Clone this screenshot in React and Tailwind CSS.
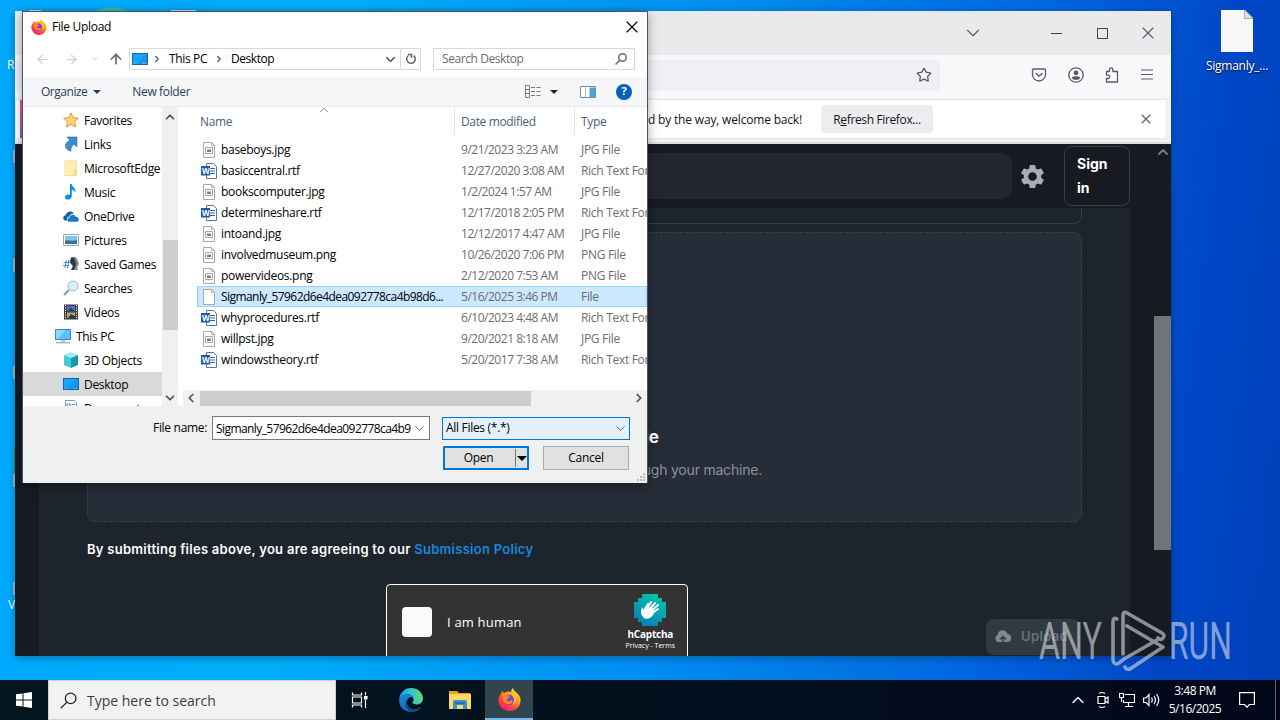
import {
  LuChevronDown,
  LuChevronUp,
  LuChevronLeft,
  LuChevronRight,
  LuX,
  LuArrowLeft,
  LuArrowRight,
  LuArrowUp,
  LuStar,
} from "react-icons/lu";
import { MdSettings } from "react-icons/md";

const PLACES = [
  { name: "Favorites", icon: "star" },
  { name: "Links", icon: "link" },
  { name: "MicrosoftEdge", icon: "folder" },
  { name: "Music", icon: "music" },
  { name: "OneDrive", icon: "cloud" },
  { name: "Pictures", icon: "picture" },
  { name: "Saved Games", icon: "games" },
  { name: "Searches", icon: "search" },
  { name: "Videos", icon: "video" },
  { name: "This PC", icon: "pc", root: true },
  { name: "3D Objects", icon: "cube" },
  { name: "Desktop", icon: "desktop", active: true },
  { name: "Documents", icon: "doc" },
];

const FILES = [
  { name: "baseboys.jpg", date: "9/21/2023 3:23 AM", type: "JPG File" },
  { name: "basiccentral.rtf", date: "12/27/2020 3:08 AM", type: "Rich Text Format" },
  { name: "bookscomputer.jpg", date: "1/2/2024 1:57 AM", type: "JPG File" },
  { name: "determineshare.rtf", date: "12/17/2018 2:05 PM", type: "Rich Text Format" },
  { name: "intoand.jpg", date: "12/12/2017 4:47 AM", type: "JPG File" },
  { name: "involvedmuseum.png", date: "10/26/2020 7:06 PM", type: "PNG File" },
  { name: "powervideos.png", date: "2/12/2020 7:53 AM", type: "PNG File" },
  {
    name: "Sigmanly_57962d6e4dea092778ca4b98d6...",
    date: "5/16/2025 3:46 PM",
    type: "File",
    selected: true,
  },
  { name: "whyprocedures.rtf", date: "6/10/2023 4:48 AM", type: "Rich Text Format" },
  { name: "willpst.jpg", date: "9/20/2021 8:18 AM", type: "JPG File" },
  { name: "windowstheory.rtf", date: "5/20/2017 7:38 AM", type: "Rich Text Format" },
];

function FirefoxIcon({ id, className }) {
  return (
    <svg viewBox="0 0 24 24" className={className}>
      <defs>
        <linearGradient id={`${id}-body`} x1="0.85" y1="0.1" x2="0.2" y2="0.95">
          <stop offset="0" stopColor="#ffe226" />
          <stop offset="0.35" stopColor="#ff9a1f" />
          <stop offset="0.65" stopColor="#ff4a3d" />
          <stop offset="1" stopColor="#e81e7c" />
        </linearGradient>
      </defs>
      <path
        fill={`url(#${id}-body)`}
        d="M3 6.500 4.200 2.800c.7 1 1.300 1.600 2.300 2.300 1-.9 2.200-1.300 3.700-1.500 1.200-.2 2.600.1 3.600.7C13.500 2.600 14.200 1 15.800 0c.2 2.200 2.200 3.500 4 5.200 2 2 3.800 4.300 3.800 7.600A11.500 11.200 0 0 1 .5 12.800C.4 10.300 1.200 8 3 6.500z"
      />
      <circle cx="12.300" cy="12.400" r="5.200" fill="#7542e5" />
      <path
        fill="#ff8a16"
        d="M4 6.800c2.300-.6 4.500.2 5.300 1.800 1.200.1 2.700.1 3 .7-.2 1.200-2.900 1.300-3.300 2.600-.2 1.300.9 1.600 2 1.800 1.600.3 2.900-1 4.300-.4 0 2.200-2.300 4-4.800 3.500C6.300 16 4 12.500 4 6.800z"
      />
      <path
        fill="#ffbd24"
        d="M14.500 4.500c3.200 1.700 5 4.600 4.300 8.300-.5 2.500-2.300 4.200-4.500 4.700 2.900-2.500 3.300-5.800 1.200-8.400-.8-1.100-1.300-2.700-1-4.600z"
      />
    </svg>
  );
}

function EdgeIcon() {
  return (
    <svg viewBox="0 0 24 24" className="size-6">
      <defs>
        <linearGradient id="edge-top" x1="0" y1="0.5" x2="1" y2="0.4">
          <stop offset="0" stopColor="#1b9de2" />
          <stop offset="0.5" stopColor="#35c1d8" />
          <stop offset="1" stopColor="#62dc6d" />
        </linearGradient>
        <linearGradient id="edge-base" x1="0" y1="0" x2="0.8" y2="1">
          <stop offset="0" stopColor="#1b8bdc" />
          <stop offset="1" stopColor="#0f5db5" />
        </linearGradient>
      </defs>
      <path
        fill="url(#edge-top)"
        d="M.3 11C.8 4.700 5.800 0 12 0c7 0 12 5 12 10.500 0 3.800-2.800 6-6.300 6-2.700 0-4.300-.9-4.300-1.900 0-.8 1.100-1.200 1.100-3.200C14.500 8.700 12 6.600 8.500 6.600 4.800 6.600 1.800 8.300.3 11z"
      />
      <path
        fill="url(#edge-base)"
        d="M.2 12.800C.3 8.700 4 6.500 8.200 6.500c3 0 5 1.200 5.900 3-3.600-1-6.200 1.200-6.200 4.700 0 4.300 3.900 7.600 8.600 7.100 1.700-.2 3.500-.9 4.700-1.900.4-.2.700.2.400.6C19.400 22.600 15.900 24 12.300 24 5.400 24 0 19 .2 12.800z"
      />
      <path
        fill="#114a8b"
        d="M10 10.200c-2.600 2.500-2.600 7.200.3 9.600 3 2.400 7.300 2 11-.6.5-.3.800.1.500.5C19.500 22.500 16 24 12.700 24 8.700 22.800 6 19.200 6.300 15.300c.2-2.500 1.600-4.300 3.700-5.100z"
      />
    </svg>
  );
}

function ExplorerIcon() {
  return (
    <svg viewBox="0 0 22 20" className="h-5 w-[22px]">
      <path fill="#e8a317" d="M0 1h8l2 2h11v5H0z" />
      <path fill="#ffd863" d="M0 4h22v15H0z" />
      <path fill="#3a93d6" d="M4 12a2 2 0 0 1 2-2h10a2 2 0 0 1 2 2v7h-4v-4H8v4H4z" />
      <path fill="#1b6fb5" d="M6 12h10v2H6z" />
    </svg>
  );
}

// Magnifier with its handle to the lower left
function SearchIcon({ className, strokeWidth }) {
  return (
    <svg viewBox="0 0 16 16" className={className} fill="none" stroke="currentColor" strokeWidth={strokeWidth}>
      <circle cx="10" cy="6" r="5" />
      <path d="M6.500 9.500.7 15.300" />
    </svg>
  );
}

function MonitorIcon() {
  return (
    <svg viewBox="0 0 16 16" className="size-4">
      <path fill="#1066b0" d="M0 2h16v12H0z" />
      <path fill="#1c92ee" d="M1 3h14v10H1z" />
      <path fill="#12a5fc" d="M1 3h12l-8 10H1z" />
      <path stroke="#9cd6ff" strokeWidth=".8" d="M2 12.500h1M11 12.500h1M13 12.500h1" />
    </svg>
  );
}

function PlaceIcon({ name }) {
  if (name === "desktop") {
    return <MonitorIcon />;
  }
  return (
    <svg viewBox="0 0 16 16" className="size-4 shrink-0" fill="none">
      {name === "star" && (
        <path
          d="m8 .8 2.200 4.800 5.200.6-3.900 3.500 1.100 5.300L8 12.300 3.400 15l1.100-5.300L.6 6.200l5.200-.6z"
          fill="#ffd474"
          stroke="#e09545"
        />
      )}
      {name === "link" && (
        <path
          d="M4 1h10v10l-3-2.800c-2.300 1.300-3.200 3.700-3 7-3.600-.8-5.600-3-5.500-5.500C2.600 7.200 4.500 5.400 7 4.200z"
          fill="#3b8bd1"
          stroke="#286eac"
          strokeWidth=".6"
        />
      )}
      {name === "folder" && (
        <>
          <path d="M2 .8h11.500v14.700H2z" fill="#fff0b5" stroke="#ecd68b" strokeWidth=".7" />
          <path d="M10.500 9.500h3.500v6h-3.500z" fill="#f6dc85" />
        </>
      )}
      {name === "music" && (
        <path
          d="M7 0h1.700c.2 3.300 4.800 3.800 3.600 9-.5-2-1.600-3-3.500-3.200V12c0 2-1.500 3.600-3.800 3.600-2 0-3-1-3-2.400C2 11.200 4.300 10 7 10.800z"
          fill="#0c8ce9"
        />
      )}
      {name === "cloud" && (
        <>
          <path d="M2 12.500C-.8 11 0 7.500 2.800 7.300 3.200 3.800 8 2 11 5.200c-3 .2-4.300 2-4.600 3.300-2.400.3-3 2.500-2 4z" fill="#0f5eb0" />
          <path d="M5.800 13.700c-2-.2-2.100-3.700.7-4.200.6-3.300 5.100-3.700 6.300-.8 3.500 0 4 4.600.9 5z" fill="#1c78ca" />
        </>
      )}
      {name === "picture" && (
        <>
          <path d="M.5 2.500h15v11H.5z" fill="#fff" stroke="#9ba7b4" />
          <path d="M2 4h12v8H2z" fill="#7dc4f0" />
          <path d="M2 9c3-2 6 1 12-1v4H2z" fill="#3d6e94" />
        </>
      )}
      {name === "games" && (
        <>
          <path d="M8 1.500c2.500-1.500 6-.5 6.500 2.500l1.500 4-2 3 1 3H8l2-4-3-3z" fill="#7b8790" />
          <path d="M8 2c2-1 4 0 4 2l1 4-2 6H8l2-4-3-4z" fill="#2f383f" />
          <path d="M.5 6.500H7M0 9.500h6.500M3.300 4 2 12M6 4 4.500 12" stroke="#4a97cb" strokeWidth="1.200" />
        </>
      )}
      {name === "search" && (
        <>
          <path d="m1 15 5-5" stroke="#8a97a2" strokeWidth="2" />
          <circle cx="10" cy="6" r="5" fill="#d8effc" stroke="#9fb7c8" />
        </>
      )}
      {name === "video" && (
        <>
          <path d="M1 .5h14v15H1z" fill="#3b3b3b" />
          <path d="M4 2h8v5.500H4z" fill="#4f6fd0" />
          <path d="M4 8.500h8V14H4z" fill="#bda94b" />
          <path d="m4 7.500 4-4 4 4zM5 14l3-4 4 2v2z" fill="#273a67" />
          <path d="M2.500 1v14M13.500 1v14" stroke="#eee" strokeDasharray="1.200 1.200" />
        </>
      )}
      {name === "pc" && (
        <>
          <path d="M.5 1.500h15v10H.5z" fill="#5cc2f5" stroke="#368bc1" />
          <path d="M1 2h9l-7 9H1z" fill="#8cd8fb" />
          <path d="M1 14.800h14M6 13h4" stroke="#7b94a5" />
        </>
      )}
      {name === "cube" && (
        <>
          <path d="m8 0 7 3-7 3-7-3z" fill="#9cecf2" />
          <path d="m1 3 7 3v10l-7-3z" fill="#45c8d9" />
          <path d="m15 3-7 3v10l7-3z" fill="#1597ae" />
        </>
      )}
      {name === "doc" && (
        <>
          <path d="M2.500 .5h9l2 2v13h-11z" fill="#fff" stroke="#8496a5" />
          <path d="M4 4h3v3H4zM8.500 4.500H12M8.500 6.500H12M4 9h8M4 11h8" stroke="#4295cf" />
        </>
      )}
    </svg>
  );
}

function FileIcon({ file }) {
  if (file.name.endsWith(".rtf")) {
    return (
      <span className="relative flex h-4 w-4 shrink-0 items-center">
        <svg viewBox="0 0 16 16" className="size-4">
          <path d="M5.500.5h7l3 3v12h-10z" fill="#fff" stroke="#5577a6" />
          <path d="M9 5.500h5M9 8h5M9 10.500h5" stroke="#3467b0" />
          <path d="M0 3h9v9.500H0z" fill="#2259b0" />
        </svg>
        <span className="absolute left-px top-[3px] font-['Open_Sans',sans-serif] text-[8px] font-bold leading-[9px] text-white">
          W
        </span>
      </span>
    );
  }
  return (
    <svg viewBox="0 0 16 16" className="size-4 shrink-0" fill="none">
      <path d="M2.500.5h8l3 3v12h-11z" fill="#fff" stroke="#a8a8a8" />
      <path d="M10.500.5v3h3" stroke="#b4b4b4" />
      {!file.selected && (
        <>
          <path d="M4.500 5.500h7v6h-7z" stroke="#a5a5a5" />
          <path d="M6 7.500h4v2.500H6z" fill="#6d8294" />
        </>
      )}
    </svg>
  );
}

function TitleBar() {
  return (
    <div className="flex h-11 items-center justify-end border-t border-[#dcebff] bg-[#eaeaed] pb-px text-[#5b5b62]">
      <LuChevronDown className="mr-[67px] size-[22px]" strokeWidth={1.200} />
      <span className="mr-[35px] h-px w-[11px] bg-[#45454b]" />
      <span className="mr-[30px] size-[11px] border border-[#45454b]" />
      <LuX className="mr-[13px] size-5" strokeWidth={1.300} />
    </div>
  );
}

function NavBar() {
  return (
    <div className="flex h-[43px] items-center bg-[#f9f9fb] pb-[3px] text-[#5b5b66]">
      <div className="flex h-[31px] w-[925px] items-center justify-end rounded-r bg-[#f0f0f4] pr-2">
        <LuStar className="size-4" strokeWidth={2} />
      </div>
      <svg viewBox="0 0 16 16" className="ml-[91px] size-4" fill="none" stroke="currentColor" strokeWidth="1.300" strokeLinecap="round" strokeLinejoin="round">
        <path d="M2.500 2h11q1 0 1 1v4.500a6.500 6.500 0 0 1-13 0V3q0-1 1-1z" />
        <path d="m5 6.500 3 2.800 3-2.800" />
      </svg>
      <svg viewBox="0 0 16 16" className="ml-[21px] size-4" fill="none" stroke="currentColor" strokeWidth="1.300">
        <circle cx="8" cy="8" r="7.200" />
        <circle cx="8" cy="5.800" r="2.400" fill="currentColor" stroke="none" />
        <path d="M3.700 11c0-2.200 8.600-2.200 8.600 0-1.600 2.600-7 2.600-8.600 0z" fill="currentColor" stroke="none" />
      </svg>
      <svg viewBox="0 0 16 16" className="ml-5 size-4" fill="none" stroke="currentColor" strokeWidth="1.300" strokeLinejoin="round">
        <path d="M2.500 4.500h3V2.500a1.700 1.700 0 0 1 3.400 0v2h4.600V15h-11v-3.500H4a1.600 1.600 0 0 0 0-3.300H2.500z" />
      </svg>
      <svg viewBox="0 0 16 16" className="ml-[19px] size-4" stroke="currentColor" strokeWidth="1.200">
        <path d="M2 3h12M2 7.500h12M2 12h12" />
      </svg>
    </div>
  );
}

function Notification() {
  return (
    <div className="flex h-[46px] flex-col border-b-2 border-[#dedee0] bg-[#f2f2f4] pr-1 pt-px">
      <div className="flex h-10 items-center border border-[#e7e7ea] bg-white pl-[4px] text-xs text-[#15141a]">
        <span className="h-[38px] w-1 shrink-0 bg-linear-to-b from-[#ff4f6a] to-[#8a4fd8]" />
        <span className="ml-[607px] w-[171px] whitespace-nowrap pt-0.5 text-right tracking-[-0.015em]">
          and by the way, welcome back!
        </span>
        <button className="ml-[19px] h-7 w-28 rounded bg-[#ededf0] pt-0.5 tracking-[-0.03em]">
          R<u>e</u>fresh Firefox...
        </button>
        <LuX className="ml-auto mr-3 size-4 text-[#5b5b66]" strokeWidth={1.600} />
      </div>
    </div>
  );
}

function HCaptcha() {
  return (
    <div className="mx-auto mt-[25px] flex h-[76px] w-[302px] items-center rounded border border-white bg-[#333] pl-[15px] pr-3 text-white">
      <span className="size-[30px] rounded bg-[#fafafa]" />
      <span className="ml-[15px] pt-0.5 text-[13px] tracking-[0.015em]">I am human</span>
      <div className="ml-auto flex flex-col items-center">
        <svg viewBox="0 0 32 32" className="size-8">
          <defs>
            <linearGradient id="hc" x1="0.8" y1="0" x2="0.3" y2="1">
              <stop offset="0" stopColor="#00c8b0" />
              <stop offset="1" stopColor="#087fb5" />
            </linearGradient>
          </defs>
          <path fill="url(#hc)" d="M8 0h16v4h4v4h4v16h-4v4h-4v4H8v-4H4v-4H0V8h4V4h4z" />
          <path d="m11 15 3-5M13 15l4-7M15 16l6-7M16 18l8-7M17 20l7-5" stroke="#fff" strokeWidth="2" strokeLinecap="round" />
          <path d="m8 13 2 3 2-3 6 1 3 3-2 4q-4 5-8 3.500-4-2-4-7z" fill="#fff" />
        </svg>
        <b className="mt-px text-[10px] leading-[14px] tracking-[-0.02em]">hCaptcha</b>
        <span className="text-[7px] leading-[10px]">Privacy - Terms</span>
      </div>
    </div>
  );
}

function SubmitPage() {
  return (
    <div className="flex h-[512px] bg-[#171a21]">
      <div className="flex w-6 shrink-0" />
      <div className="flex w-[1091px] flex-col font-[Inter,sans-serif]">
        <header className="flex h-16 items-center">
          <div className="h-[46px] w-[973px] rounded-xl bg-[#24272e]" />
          <MdSettings className="ml-[6px] size-[29px] text-[#a3aebb]" />
          <button className="ml-[17px] flex h-[60px] w-[66px] items-center rounded-lg border border-[#3b3e45] pl-3 text-left text-sm font-bold leading-6 text-white">
            Sign
            <br />
            in
          </button>
        </header>
        <main className="flex h-[448px] flex-col overflow-hidden bg-[#1d242c] px-12">
          <div className="h-4 shrink-0 rounded-b-lg border border-t-0 border-[#363e47]" />
          <div className="mt-2 flex h-[290px] w-[995px] shrink-0 flex-col items-center rounded-lg border border-dashed border-[#3a414d] bg-[#262c38] pt-[192px]">
            <h2 className="w-[149px] text-right text-[17px] font-bold leading-6 text-white">file</h2>
            <p className="mt-[9px] w-[355px] text-right text-sm leading-6 tracking-[-0.015em] text-[#8c929c]">
              through your machine.
            </p>
          </div>
          <p className="mt-[15px] text-[13px] font-semibold leading-6 tracking-[0.021em] text-white">
            By submitting files above, you are agreeing to our{" "}
            <span className="text-[#1687dd]">Submission Policy</span>
          </p>
          <div className="relative mt-[-2px] font-['Open_Sans',sans-serif]">
            <div className="ml-[299px] w-[302px]">
              <HCaptcha />
            </div>
            <div className="absolute left-[899px] top-[60px] flex h-9 w-[94px] items-center rounded-lg bg-[#323a41] pl-2 font-[Inter,sans-serif] text-[13px] font-semibold tracking-[0.03em] text-[#687078]">
              <svg viewBox="0 0 18 16" className="mr-[9px] h-4 w-[18px]">
                <path d="M4 13a4 4 0 0 1-.2-7.500C4.500 0 12 0 13.500 5c5 .5 5 8 0 8z" fill="#7f868c" />
                <path d="M9 15V8M6 10.500l3-3 3 3" stroke="#323a41" strokeWidth="1.500" fill="none" />
              </svg>
              Upload
            </div>
          </div>
        </main>
      </div>
      <div className="ml-auto flex w-[17px] flex-col items-center text-[#777a80]">
        <LuChevronUp className="size-4" strokeWidth={3} />
        <div className="mt-[156px] h-[234px] w-full bg-[#717477]" />
      </div>
    </div>
  );
}

function FileDialog() {
  return (
    <div className="absolute left-[22px] top-[11px] flex h-[472px] w-[626px] flex-col border-x border-t border-[#4d5560] bg-white text-xs text-black shadow-[0_3px_10px_rgba(0,0,0,0.35)]">
      <div className="flex h-[30px] shrink-0 items-center pl-2 pr-[5px]">
        <FirefoxIcon id="ff-title" className="size-4" />
        <span className="ml-[5px] tracking-[-0.025em]">File Upload</span>
        <LuX className="ml-auto size-5" strokeWidth={1.400} />
      </div>

      <div className="flex h-[35px] shrink-0 items-center pb-px pl-3 text-[#d0d0d0]">
        <LuArrowLeft className="size-[15px]" />
        <LuArrowRight className="ml-[14px] size-[15px]" />
        <LuChevronDown className="ml-3 size-2" strokeWidth={3} />
        <LuArrowUp className="ml-[9px] size-4 text-[#686868]" strokeWidth={2.500} />
        <div className="ml-[5px] flex h-[22px] w-[292px] items-center border border-[#d9d9d9] pl-0.5 text-black">
          <MonitorIcon />
          <LuChevronRight className="ml-1 size-[10px] text-[#555]" strokeWidth={3} />
          <span className="ml-[7px] tracking-[-0.03em]">This PC</span>
          <LuChevronRight className="ml-[7px] size-[10px] text-[#555]" strokeWidth={3} />
          <span className="ml-[7px] tracking-[-0.04em]">Desktop</span>
          <LuChevronDown className="ml-auto mr-[2px] size-[15px] text-[#666]" strokeWidth={2.600} />
          <span className="flex h-full w-5 items-center justify-center border-l border-[#d9d9d9]">
            <svg viewBox="0 0 12 12" className="size-3" fill="none" stroke="#666" strokeWidth="1.500">
              <path d="M3.500 2.500a4.300 4.300 0 1 0 5.200.2" />
              <path d="M3 1.500h3.500V5" />
            </svg>
          </span>
        </div>
        <div className="ml-3 flex h-[22px] w-[202px] items-center justify-between border border-[#d9d9d9] pl-2 pr-[7px] text-[#6d6d6d]">
          <span className="tracking-[-0.035em]">Search Desktop</span>
          <SearchIcon className="size-3" strokeWidth={2} />
        </div>
      </div>

      <div className="flex h-[30px] shrink-0 items-center border-b border-[#e8eaed] bg-[#f5f6f7] pl-[18px] pr-[15px] text-[#2b3d5b]">
        <span className="tracking-[-0.04em]">Organize</span>
        <span className="ml-[6px] border-x-4 border-t-4 border-x-transparent border-t-[#2b3d5b]" />
        <span className="ml-[31px] tracking-[-0.03em]">New folder</span>
        <svg viewBox="0 0 16 14" className="ml-auto h-[14px] w-4" fill="none" stroke="#7a7a7a">
          <path d="M.5.5h4v12h-4zM.5 4.500h4M.5 8.500h4" />
          <path d="M6 2.500h10M6 6.500h10M6 10.500h10" strokeDasharray="4 1.500" />
        </svg>
        <span className="ml-[9px] border-x-4 border-t-4 border-x-transparent border-t-[#222]" />
        <svg viewBox="0 0 16 12" className="ml-[22px] h-3 w-4">
          <path d="M.5.5h15v11H.5z" fill="#fff" stroke="#7390a8" />
          <path d="M5.500 1v10" stroke="#b5c3cf" />
          <path d="M9.500 1.500H15V11H9.500z" fill="#48a3e5" />
        </svg>
        <span className="ml-5 flex size-4 items-center justify-center rounded-full bg-[#0862b8] text-[11px] font-bold text-white">
          ?
        </span>
      </div>

      <div className="flex h-[299px] shrink-0">
        <nav className="h-full w-[139px] overflow-hidden pt-px">
          {PLACES.map((place) => (
            <div
              key={place.name}
              className={`flex h-6 items-center gap-[5px] whitespace-nowrap tracking-[-0.025em] ${
                place.root ? "pl-8" : "pl-10"
              } ${place.active ? "bg-[#d9d9d9]" : ""}`}
            >
              <PlaceIcon name={place.icon} />
              <span className="pt-px">{place.name}</span>
            </div>
          ))}
        </nav>
        <div className="flex w-4 flex-col items-center bg-[#f0f0f0] text-[#505050]">
          <LuChevronUp className="mt-[3px] size-[14px]" strokeWidth={3} />
          <div className="mt-[116px] h-[90px] w-[15px] bg-[#cdcdcd]" />
          <LuChevronDown className="mb-px mt-auto size-[14px]" strokeWidth={3} />
        </div>

        <div className="flex min-w-0 flex-1 flex-col pl-[5px]">
          <div className="relative flex h-7 text-[#4c607a]">
            <LuChevronUp className="absolute left-[134px] top-[-4px] size-[14px] text-[#777]" strokeWidth={1.600} />
            <span className="w-[272px] border-r border-[#e5e5e5] pl-[17px] leading-[29px] tracking-[-0.03em]">Name</span>
            <span className="w-[120px] border-r border-[#e5e5e5] pl-[6px] leading-[29px] tracking-[-0.03em]">
              Date modified
            </span>
            <span className="pl-[6px] leading-[29px] tracking-[-0.03em]">Type</span>
          </div>
          <div className="mt-1 flex flex-1 flex-col">
            {FILES.map((file) => (
              <div
                key={file.name}
                className={`ml-[14px] flex h-[21px] items-center overflow-hidden whitespace-nowrap pl-1 text-[#6d6d6d] ${
                  file.selected ? "bg-[#cce8ff] outline -outline-offset-1 outline-[#99d1ff]" : ""
                }`}
              >
                <FileIcon file={file} />
                <span
                  className={`ml-1 w-60 shrink-0 text-black ${
                    file.selected ? "tracking-[-0.047em]" : "tracking-[-0.025em]"
                  }`}
                >
                  {file.name}
                </span>
                <span className="w-[120px] shrink-0 tracking-[-0.04em]">{file.date}</span>
                <span className="shrink-0 tracking-[-0.025em]">{file.type}</span>
              </div>
            ))}
          </div>
          <div className="flex h-4 items-center justify-between bg-[#f0f0f0] px-px text-[#505050]">
            <LuChevronLeft className="size-[14px]" strokeWidth={3} />
            <div className="ml-0.5 mr-auto h-[15px] w-[331px] bg-[#cdcdcd]" />
            <LuChevronRight className="size-[14px]" strokeWidth={3} />
          </div>
        </div>
      </div>

      <footer className="relative flex flex-1 flex-col gap-[6px] bg-[#f0f0f0] pt-[10px]">
        <div className="flex h-6 items-center">
          <span className="ml-[130px] w-[59px] tracking-[-0.025em]">File name:</span>
          <div className="flex h-6 w-[218px] items-center border border-[#7a7a7a] bg-white pl-[3px]">
            <span className="w-[195px] overflow-hidden whitespace-nowrap pt-0.5 tracking-[-0.048em]">
              Sigmanly_57962d6e4dea092778ca4b9
            </span>
            <LuChevronDown className="ml-px size-[15px] text-[#666]" strokeWidth={1.600} />
          </div>
          <div className="ml-3 flex h-[23px] w-[188px] items-center justify-between border border-[#0078d7] bg-[#e5f1fb] pl-[3px] pr-px">
            <span className="tracking-[-0.025em]">All Files (*.*)</span>
            <LuChevronDown className="size-[15px] text-[#666]" strokeWidth={1.600} />
          </div>
        </div>
        <div className="flex h-6">
          <button className="ml-[420px] flex h-6 w-[86px] items-center border-2 border-[#0078d7] bg-[#e1e1e1]">
            <span className="w-[67px] text-center tracking-[-0.03em]">Open</span>
            <span className="ml-[3px] h-[18px] border-l border-[#777]" />
            <span className="ml-px border-x-[5px] border-t-[5px] border-x-transparent border-t-black" />
          </button>
          <button className="ml-[14px] h-6 w-[86px] border border-[#adadad] bg-[#e1e1e1] tracking-[-0.02em]">
            Cancel
          </button>
        </div>
        <svg viewBox="0 0 10 10" className="absolute bottom-px right-px size-[10px]" fill="#bcbcbc">
          <path d="M7 1h2v2H7zM4 4h2v2H4zM7 4h2v2H7zM1 7h2v2H1zM4 7h2v2H4zM7 7h2v2H7z" />
        </svg>
      </footer>
    </div>
  );
}

// Icons of the left desktop column that stick out from behind the browser
function Desktop() {
  return (
    <>
      <svg viewBox="0 0 210 660" className="absolute left-0 top-0 h-[660px] w-[210px]">
        <ellipse cx="112" cy="16" rx="17" ry="9" fill="#35bdb9" />
        <path d="M171 10h25v5h-25zM29 10h12v5H29z" fill="#c9dce9" />
        <path d="M13 150h3v13h-3zM13 258h3v14h-3zM13 366h3v13h-3zM13 474h3v13h-3zM13 582h3v13h-3z" fill="#8fbfd4" />
        <path d="M14 448h2v24h-2z" fill="#36925c" />
      </svg>
      <span className="absolute left-[7px] top-[57px] text-xs text-white">R</span>
      <span className="absolute left-[8px] top-[597px] text-xs text-white">V</span>
      <div className="absolute left-[1201px] top-[10px] flex w-[72px] flex-col items-center text-xs text-white">
        <svg viewBox="0 0 32 42" className="h-[42px] w-8">
          <path d="M0 0h24l8 8v34H0z" fill="#f7f8f7" />
          <path d="M23.500 0v8.500H32z" fill="#dfe3e5" stroke="#8e979e" strokeWidth=".7" />
        </svg>
        <span className="mt-[6px] tracking-[-0.02em] [text-shadow:0_1px_2px_#000]">Sigmanly_...</span>
      </div>
    </>
  );
}

function Watermark() {
  return (
    <svg viewBox="0 0 196 66" className="absolute left-[1037px] top-[607px] h-[66px] w-[196px] opacity-60">
      <g fill="#d9dde2" fontFamily="Roboto, sans-serif" fontSize="51" fontWeight="400">
        <text x="2" y="52" textLength="63" lengthAdjust="spacingAndGlyphs">ANY</text>
        <text x="132" y="52" textLength="63" lengthAdjust="spacingAndGlyphs">RUN</text>
      </g>
      <g fill="none" stroke="#d9dde2" strokeWidth="3.600" strokeLinecap="round" strokeLinejoin="round">
        <path d="M86 47V8q0-4 4-2l35 20q4 3 0 6-2 1-4-1" />
        <path d="M80 12q-4-2-4 3v38q1 6 6 3l5-4 33-19" />
        <path d="m90 19 36 21-33 22q-4 1-5-2" />
      </g>
    </svg>
  );
}

function Taskbar() {
  return (
    <div className="absolute bottom-0 left-0 flex h-10 w-full items-center bg-linear-to-r from-[#03151e] via-[#02101e] to-[#02071a] text-white">
      <div className="flex w-12 justify-center">
        <svg viewBox="0 0 16 16" className="size-4" fill="#fff">
          <path d="M0 2.300 6.500 1.400v6.100H0zM7.500 1.200 16 0v7.500H7.500zM0 8.500h6.500v6.100L0 13.700zM7.500 8.500H16V16l-8.500-1.200z" />
        </svg>
      </div>
      <div className="flex h-full w-72 items-center border border-[#cfd0d0] bg-[#f2f2f2] pl-[11px] text-[#3c3c3c]">
        <SearchIcon className="size-[17px] text-[#222]" strokeWidth={1.200} />
        <span className="ml-[10px] pt-px text-sm">Type here to search</span>
      </div>
      <svg viewBox="0 0 18 16" className="ml-[15px] h-4 w-[18px]" fill="none" stroke="#fff" strokeWidth="1.200">
        <path d="M1.500.5V3h9V.5M1.500 15.500V13h9v2.500M1.500 5h9v6h-9zM14.500 0v3.500M14.500 8v8" />
        <path d="M13.500 4.500h2.500V7h-2.500z" fill="#fff" />
      </svg>
      <div className="ml-[30px]">
        <EdgeIcon />
      </div>
      <div className="ml-[26px]">
        <ExplorerIcon />
      </div>
      <div className="ml-[14px] flex h-full w-12 items-center justify-center border-b-2 border-[#76b9ed] bg-[#32444e]">
        <FirefoxIcon id="ff-task" className="size-[23px]" />
      </div>
      <div className="ml-auto flex h-full items-center">
        <LuChevronUp className="size-[20px]" strokeWidth={1.600} />
        <svg viewBox="0 0 12 18" className="ml-[9px] h-[18px] w-3" fill="none" stroke="#fff" strokeWidth="1.200">
          <path d="M1 5.500h7v7H1zM8 8l3-2v6l-3-2M2 2.500q3-2 6 0M2 15.500q3 2 6 0" />
        </svg>
        <svg viewBox="0 0 16 14" className="ml-[10px] h-[14px] w-4" fill="none" stroke="#fff" strokeWidth="1.200">
          <path d="M6 1.500h9.500v8H4.500V7M9.500 9.500v4M6 13.500h8M.5.500h4v4h-4zM2.500 4.500V9" />
        </svg>
        <svg viewBox="0 0 17 14" className="ml-2 h-[14px] w-[17px]" fill="none" stroke="#fff" strokeWidth="1.200">
          <path d="M.6 5h2.500L6 1.500v11L3.100 9.500H.6z" />
          <path d="M8.500 4.500q1.500 2.500 0 5M11 3q3 4 0 8M13.500 1q4.500 6 0 12" />
        </svg>
        <div className="ml-2 flex w-[54px] flex-col items-center text-xs leading-[18px] tracking-[-0.04em]">
          <span>3:48 PM</span>
          <span>5/16/2025</span>
        </div>
        <svg viewBox="0 0 16 16" className="ml-[17px] size-4" fill="none" stroke="#fff" strokeWidth="1.200">
          <path d="M.6.6h14.800v11.900h-5L8 15.200l-2.400-2.700h-5z" />
        </svg>
        <span className="ml-5 mr-1 h-10 w-px bg-[#5c626c]" />
      </div>
    </div>
  );
}

function App() {
  return (
    <div className="relative h-[720px] w-[1280px] overflow-hidden bg-[linear-gradient(97deg,#00a8fc_0%,#00aefa_25%,#008ff2_52%,#0068df_76%,#0048c8_90%,#003db6_100%)] font-['Open_Sans',sans-serif]">
      <Desktop />
      <div className="absolute left-[15px] top-[11px] flex h-[645px] w-[1156px] flex-col overflow-hidden shadow-[0_2px_8px_rgba(0,0,0,0.3)]">
        <TitleBar />
        <NavBar />
        <Notification />
        <SubmitPage />
      </div>
      <FileDialog />
      <Watermark />
      <Taskbar />
    </div>
  );
}

export default App;
